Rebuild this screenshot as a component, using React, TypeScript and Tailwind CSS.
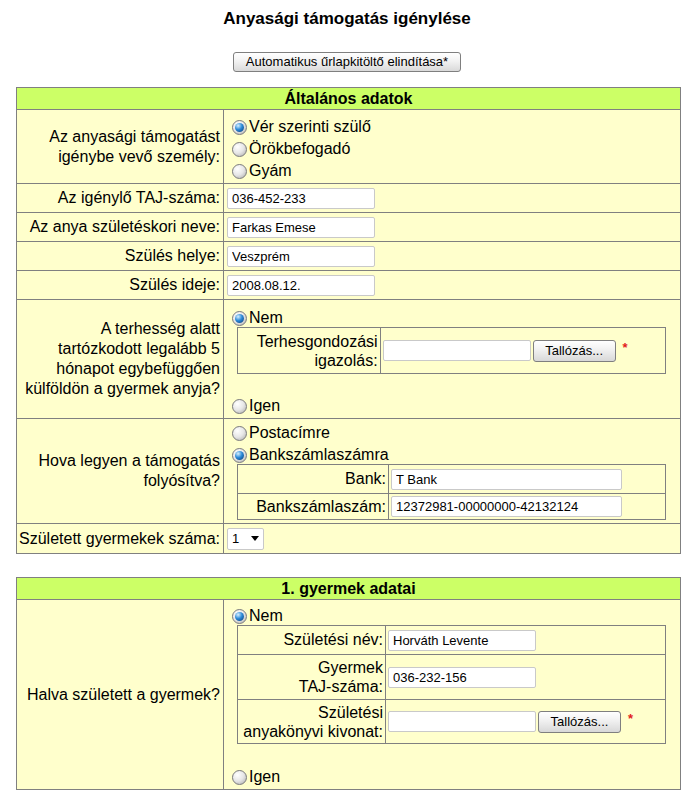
import React from 'react';

const cell = 'border border-[#808080]';
const arial = 'font-[family-name:Liberation_Sans,Arial,sans-serif]';

function Radio({ checked, label }: { checked?: boolean; label: string }) {
  return (
    <div className="flex h-[22px] items-end">
      <div className="flex h-[18px] items-center">
        <span className="relative mr-[2px] inline-block h-[15px] w-[15px] shrink-0 rounded-full border border-[#7c7c7c] bg-[radial-gradient(circle_at_35%_30%,#ffffff,#e6e6e6_50%,#a8a8a8)]">
          {checked && (
            <span className="absolute left-[2px] top-[2px] h-[9px] w-[9px] rounded-full bg-[radial-gradient(circle_at_35%_30%,#d6f0ff,#2c8ad8_45%,#06336f)]" />
          )}
        </span>
        <span className="leading-[18px]">{label}</span>
      </div>
    </div>
  );
}

function TextBox({ value, w = 'w-[148px]' }: { value?: string; w?: string }) {
  return (
    <input
      readOnly
      value={value ?? ''}
      className={`block ${w} h-[21px] rounded-[2px] border border-[#c9c9c9] bg-white px-[4px] ${arial} text-[13px] text-black outline-none`}
    />
  );
}

function FileBox() {
  return (
    <div className="flex items-center">
      <TextBox />
      <button
        type="button"
        className={`ml-[2px] h-[22px] w-[83px] rounded-[3px] border border-[#7f7f7f] bg-[linear-gradient(#ffffff,#f0f0f0_45%,#d8d8d8)] ${arial} text-[13px] text-black`}
      >
        Tallózás...
      </button>
      <span className="ml-[7px] -mt-[6px] text-[13px] font-bold text-[#e21b1b]">*</span>
    </div>
  );
}

function Header({ title }: { title: string }) {
  return (
    <tr className="h-[22px]">
      <th colSpan={2} className={`${cell} bg-[#ccff66] p-0 text-[16px] font-bold leading-[20px]`}>
        {title}
      </th>
    </tr>
  );
}

function Label({ children }: { children: React.ReactNode }) {
  return (
    <td className={`${cell} w-[207px] py-0 pl-0 pr-[3px] text-right align-middle leading-[20px]`}>{children}</td>
  );
}

function InputRow({ label, value }: { label: string; value: string }) {
  return (
    <tr className="h-[29px]">
      <Label>{label}</Label>
      <td className={`${cell} py-0 pl-[3px]`}>
        <TextBox value={value} />
      </td>
    </tr>
  );
}

function InnerRow({ label, children, h }: { label: React.ReactNode; children: React.ReactNode; h: string }) {
  return (
    <tr className={h}>
      <td className={`${cell} py-0 pr-[2px] text-right align-middle leading-[19px]`}>{label}</td>
      <td className={`${cell} py-0 pl-[2px] align-middle`}>{children}</td>
    </tr>
  );
}

export default function App() {
  return (
    <div className={`min-h-[806px] w-[694px] bg-white ${arial} text-[16px] text-black`}>
      <h1 className="pt-[8px] text-center text-[17px] font-bold leading-[22px]">Anyasági támogatás igénylése</h1>
      <div className="mt-[22px] flex justify-center">
        <button
          type="button"
          className={`h-[20px] w-[228px] rounded-[3px] border border-[#7f7f7f] bg-[linear-gradient(#ffffff,#f2f2f2_45%,#d9d9d9)] ${arial} text-[13px] leading-[18px] text-black`}
        >
          Automatikus űrlapkitöltő elindítása*
        </button>
      </div>

      <table className="ml-[16px] mt-[15px] w-[665px] border-collapse border border-[#808080] bg-[#ffffcc]">
        <tbody>
          <Header title="Általános adatok" />
          <tr>
            <Label>
              Az anyasági támogatást
              <br />
              igénybe vevő személy:
            </Label>
            <td className={`${cell} pb-[3px] pl-[8px] pt-[4px]`}>
              <Radio checked label="Vér szerinti szülő" />
              <Radio label="Örökbefogadó" />
              <Radio label="Gyám" />
            </td>
          </tr>
          <InputRow label="Az igénylő TAJ-száma:" value="036-452-233" />
          <InputRow label="Az anya születéskori neve:" value="Farkas Emese" />
          <InputRow label="Szülés helye:" value="Veszprém" />
          <InputRow label="Szülés ideje:" value="2008.08.12." />
          <tr>
            <Label>
              A terhesség alatt
              <br />
              tartózkodott legalább 5
              <br />
              hónapot egybefüggően
              <br />
              külföldön a gyermek anyja?
            </Label>
            <td className={`${cell} pb-[3px] pl-[8px] pt-[5px]`}>
              <Radio checked label="Nem" />
              <table className="ml-[5px] w-[429px] border-collapse border border-[#808080]">
                <tbody>
                  <InnerRow
                    h="h-[46px]"
                    label={
                      <>
                        Terhesgondozási
                        <br />
                        igazolás:
                      </>
                    }
                  >
                    <FileBox />
                  </InnerRow>
                </tbody>
              </table>
              <div className="h-[19px]" />
              <Radio label="Igen" />
            </td>
          </tr>
          <tr>
            <Label>
              Hova legyen a támogatás
              <br />
              folyósítva?
            </Label>
            <td className={`${cell} pb-[3px] pl-[8px] pt-[1px]`}>
              <Radio label="Postacímre" />
              <Radio checked label="Bankszámlaszámra" />
              <table className="ml-[5px] w-[429px] border-collapse border border-[#808080]">
                <tbody>
                  <tr className="h-[29px]">
                    <td className={`${cell} w-[151px] py-0 pr-[2px] text-right`}>Bank:</td>
                    <td className={`${cell} py-0 pl-[2px]`}>
                      <TextBox value="T Bank" w="w-[231px]" />
                    </td>
                  </tr>
                  <tr className="h-[26px]">
                    <td className={`${cell} py-0 pr-[2px] text-right`}>Bankszámlaszám:</td>
                    <td className={`${cell} py-0 pl-[2px]`}>
                      <TextBox value="12372981-00000000-42132124" w="w-[231px]" />
                    </td>
                  </tr>
                </tbody>
              </table>
            </td>
          </tr>
          <tr className="h-[30px]">
            <Label>Született gyermekek száma:</Label>
            <td className={`${cell} py-0 pl-[3px]`}>
              <div className="flex h-[22px] w-[37px] items-center justify-between rounded-[2px] border border-[#c9c9c9] bg-white px-[4px] text-[13px]">
                <span>1</span>
                <svg width="8" height="5" viewBox="0 0 8 5">
                  <path d="M0 0h8L4 5z" fill="#000" />
                </svg>
              </div>
            </td>
          </tr>
        </tbody>
      </table>

      <table className="ml-[16px] mt-[23px] w-[665px] border-collapse border border-[#808080] bg-[#ffffcc]">
        <tbody>
          <Header title="1. gyermek adatai" />
          <tr>
            <Label>Halva született a gyermek?</Label>
            <td className={`${cell} pb-[3px] pl-[8px] pt-[3px]`}>
              <Radio checked label="Nem" />
              <table className="ml-[5px] w-[429px] border-collapse border border-[#808080]">
                <tbody>
                  <tr className="h-[29px]">
                    <td className={`${cell} w-[148px] py-0 pr-[2px] text-right`}>Születési név:</td>
                    <td className={`${cell} py-0 pl-[2px]`}>
                      <TextBox value="Horváth Levente" />
                    </td>
                  </tr>
                  <InnerRow
                    h="h-[45px]"
                    label={
                      <>
                        Gyermek
                        <br />
                        TAJ-száma:
                      </>
                    }
                  >
                    <TextBox value="036-232-156" />
                  </InnerRow>
                  <InnerRow
                    h="h-[44px]"
                    label={
                      <>
                        Születési
                        <br />
                        anyakönyvi kivonat:
                      </>
                    }
                  >
                    <FileBox />
                  </InnerRow>
                </tbody>
              </table>
              <div className="h-[20px]" />
              <Radio label="Igen" />
            </td>
          </tr>
        </tbody>
      </table>
    </div>
  );
}
